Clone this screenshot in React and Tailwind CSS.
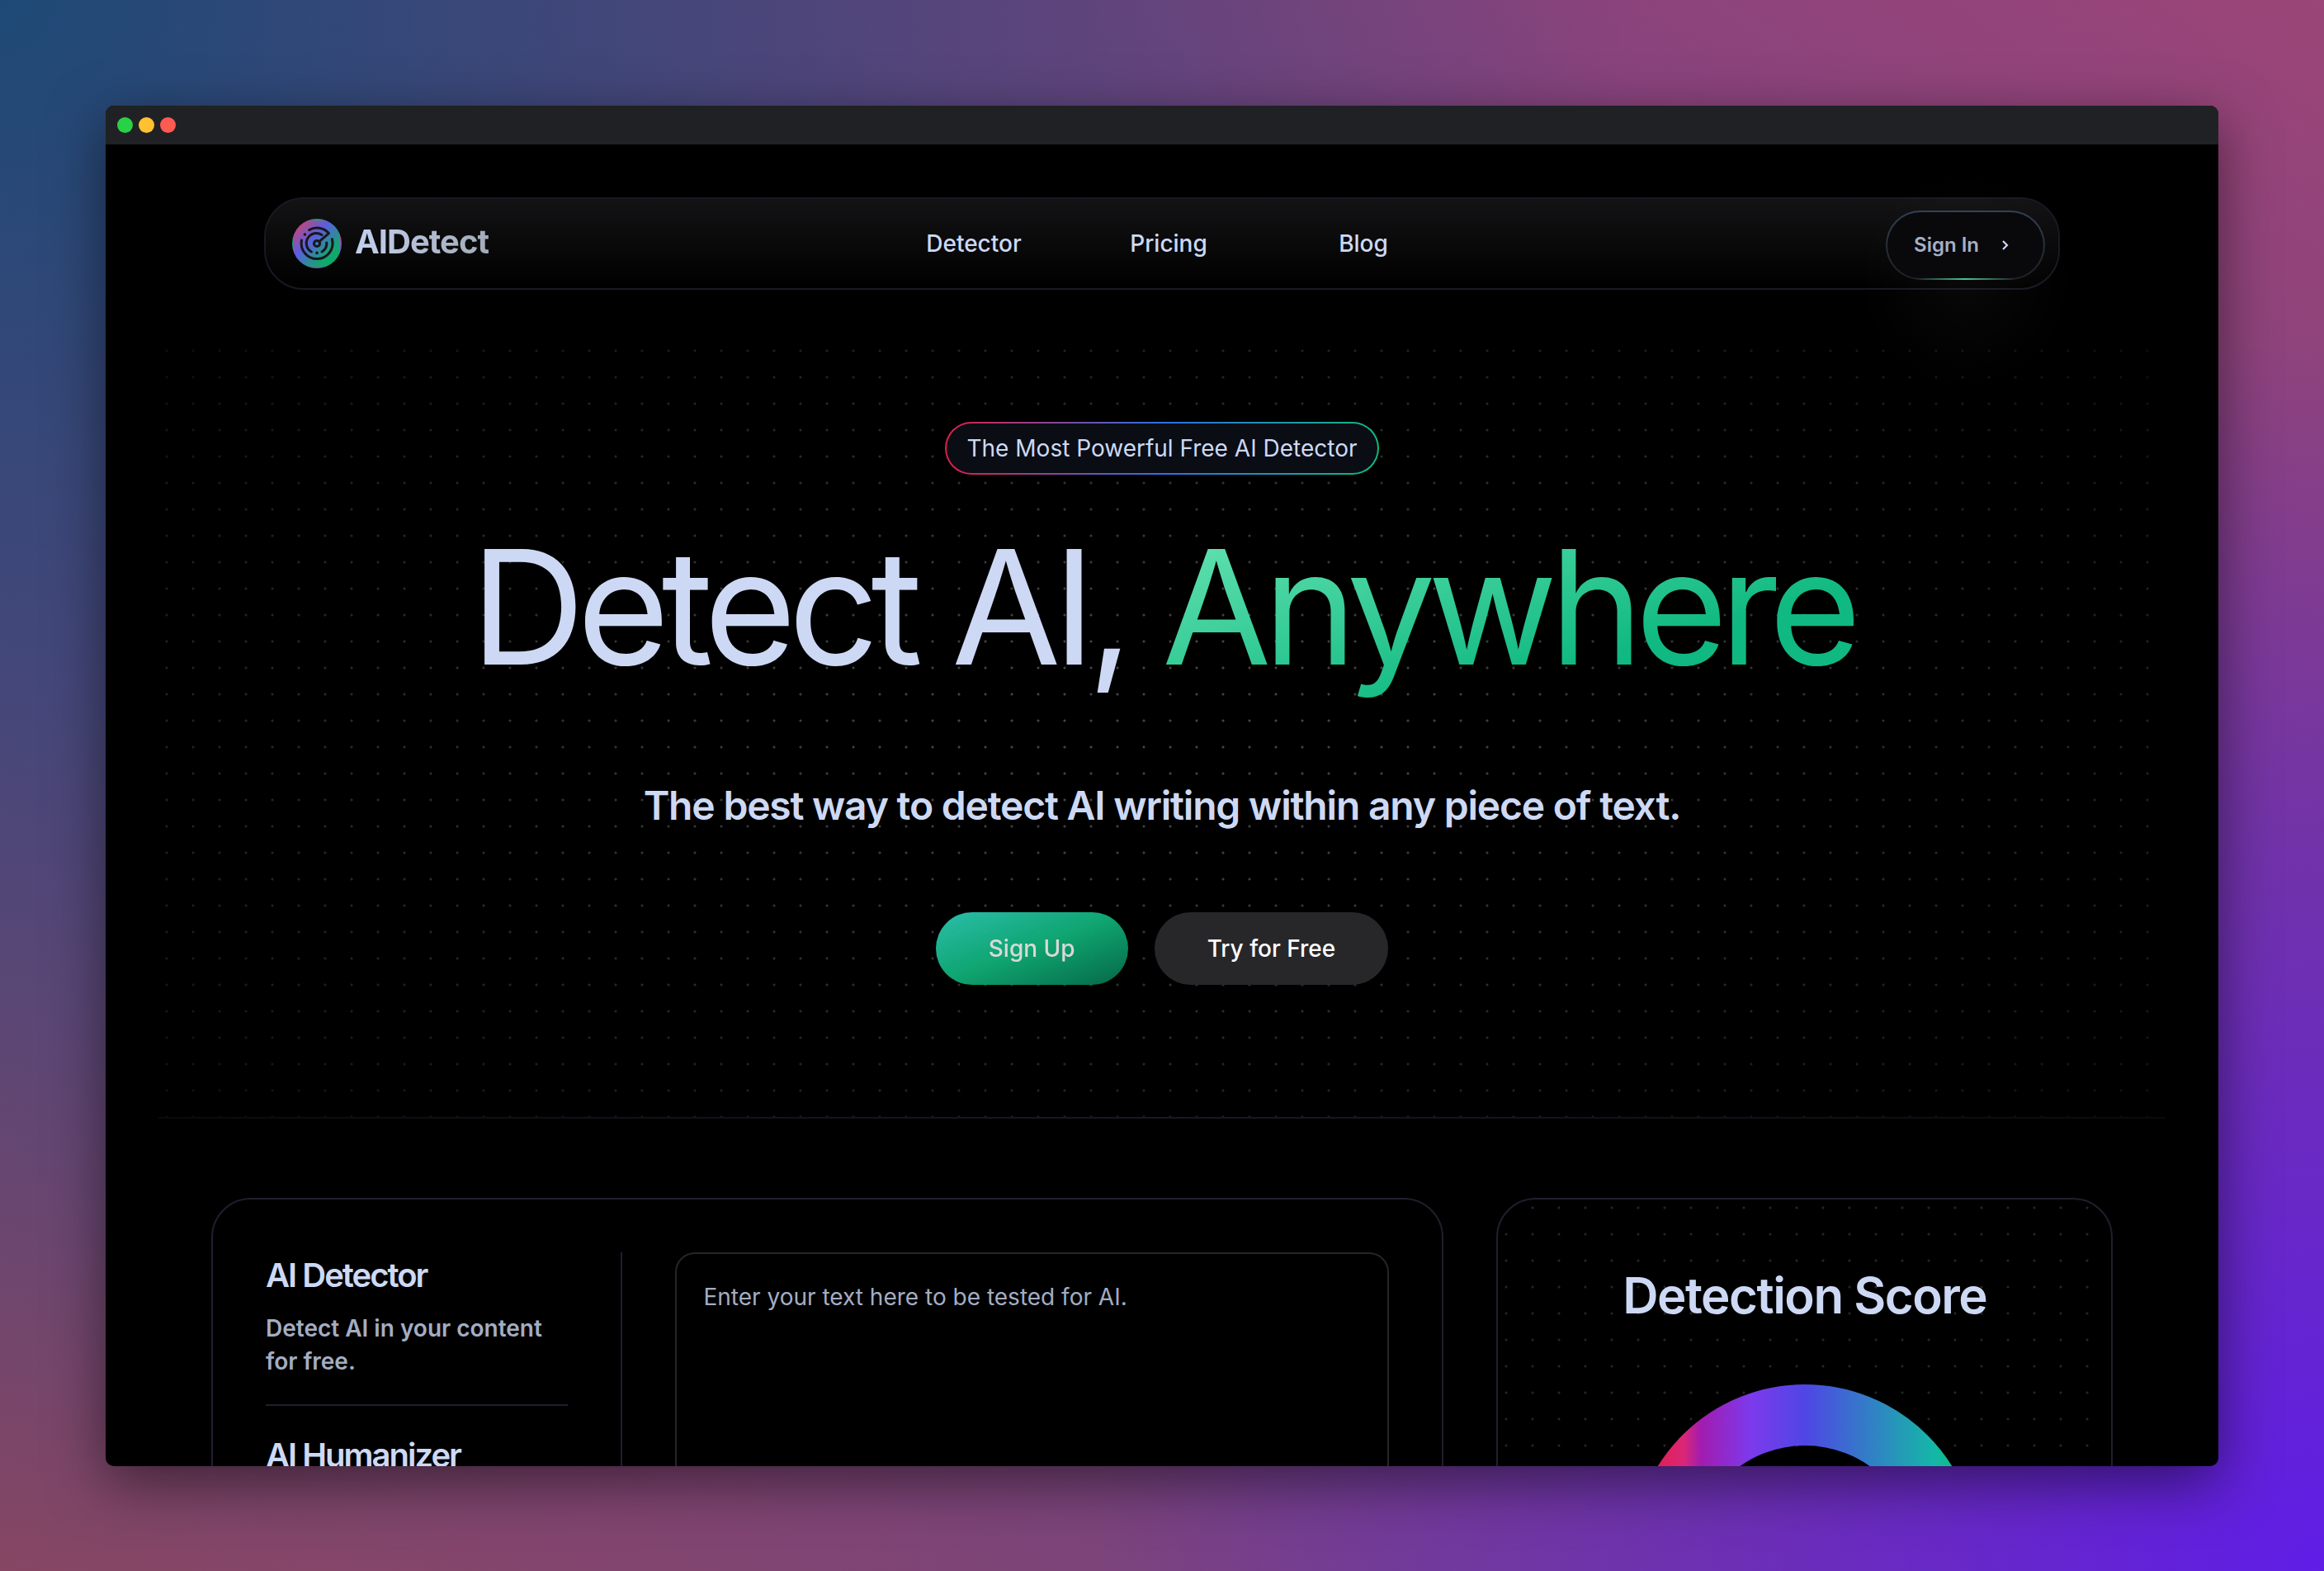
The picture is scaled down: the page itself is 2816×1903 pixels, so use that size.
import React from "react";

const DOTS =
  "bg-[radial-gradient(circle_at_10px_10px,#444_1px,transparent_2px)] bg-[size:32px_32px]";

function Logo() {
  return (
    <span className="flex size-[60px] items-center justify-center rounded-full border-2 border-transparent bg-[linear-gradient(135deg,#e0405a,#5b5ee0_40%,#10a86e_75%)]">
      <svg viewBox="0 0 24 24" className="size-12" fill="none" stroke="#18181b" strokeWidth="1.5" strokeLinecap="round" strokeLinejoin="round" aria-hidden="true">
        <circle cx="12" cy="12" r="1.8" />
        <path d="M7.3 3.8A9.5 9.5 0 0 1 19.2 5.8L13.4 10.8" />
        <path d="M2.7 10A9.5 9.5 0 1 0 21.2 9.3" />
        <path d="M15 6.8A6 6 0 1 0 8.7 17" />
        <path d="M17.9 11.5A6 6 0 0 1 15 17" />
        <circle cx="4.7" cy="6.5" r="0.9" fill="#18181b" stroke="none" />
        <circle cx="12" cy="17.7" r="0.9" fill="#18181b" stroke="none" />
      </svg>
    </span>
  );
}

function Header() {
  return (
    <header className="relative mx-auto grid w-[85%] grid-cols-3 items-center rounded-[48px] border-2 border-[#1a1822] bg-linear-to-b/srgb from-[#131315] to-black pl-8 pr-4">
      <a href="#home" className="flex items-center gap-4">
        <Logo />
        <span className="bg-linear-to-r/srgb from-[#c3d0ee] to-[#a3abb8] bg-clip-text pb-1 text-[40px] leading-[48px] font-bold tracking-tight text-transparent">
          AIDetect
        </span>
      </a>
      <nav className="grid grid-cols-3 text-center text-[28px] leading-10 font-medium text-[#cdd9f4]">
        <a href="#detector">Detector</a>
        <a href="#pricing">Pricing</a>
        <a href="#blog">Blog</a>
      </nav>
      <div className="flex justify-end pt-3.5 pb-2.5">
        <div className="relative rounded-full bg-linear-to-b/srgb from-[#334155] to-[#1c1c1e] p-0.5">
          <span className="pointer-events-none absolute top-full left-1/2 size-[260px] -translate-1/2 bg-[radial-gradient(closest-side,rgba(255,255,255,0.03),transparent)]" />
          <button className="relative flex h-20 items-center gap-7 rounded-full bg-[#09090b] pr-[42px] pl-8 text-2xl font-semibold text-[#a6afc6]">
            Sign In
            <svg viewBox="0 0 8 12" className="h-3 w-2" fill="none" stroke="#cdd9f4" strokeWidth="2.2" aria-hidden="true">
              <path d="M1 1 6 6 1 11" />
            </svg>
          </button>
          <span className="absolute inset-x-9 bottom-0 h-0.5 bg-linear-to-r/srgb from-transparent via-[#49c393] to-transparent" />
        </div>
      </div>
    </header>
  );
}

function Hero() {
  return (
    <section className="relative mx-auto mt-16 flex h-[940px] w-[95%] flex-col items-center">
      <div className={`absolute inset-x-0 top-0 bottom-0.5 ${DOTS} [mask-image:radial-gradient(ellipse_at_center,#000_15%,rgba(0,0,0,0.45)_75%,rgba(0,0,0,0.2))]`} />
      <div className="absolute inset-x-0 bottom-0 h-0.5 bg-linear-to-r/srgb from-[#0a0910] via-[#1a1824] to-[#0a0910]" />
      <div className="relative mt-24 rounded-full bg-linear-to-r/srgb from-[#e11d48] via-[#2f70e6] to-[#10b981] p-0.5">
        <p className="rounded-full bg-[#0a0d14] px-6 py-2.5 text-[28px] leading-10 text-[#cdd9f4]">
          The Most Powerful Free AI Detector
        </p>
      </div>
      <h1 className="relative mt-16 text-[192px] leading-[192px] tracking-tighter text-[#cdd9f4]">
        Detect AI,{" "}
        <span className="bg-linear-to-br/srgb from-[#6ee7b7] to-[#10b981] to-70% bg-clip-text text-transparent">Anywhere</span>
      </h1>
      <p className="relative mt-28 text-5xl leading-[66px] font-semibold tracking-tight text-[#cdd9f4]">
        The best way to detect AI writing within any piece of text.
      </p>
      <div className="relative mt-24 flex gap-8 text-[28px] leading-10 font-medium">
        <button className="rounded-full bg-linear-to-br/srgb from-[#2dc9b4] via-[#10ad76] to-[#066e4d] px-16 py-6 text-neutral-200 opacity-95">
          Sign Up
        </button>
        <button className="rounded-full bg-zinc-800 px-16 py-6 text-white">Try for Free</button>
      </div>
    </section>
  );
}

function Tool({ title, children }) {
  return (
    <div className="mb-8 border-b-2 border-[#211e2e] pb-8 last:border-b-0">
      <h2 className="text-[40px] leading-[56px] font-semibold tracking-tighter text-[#cdd9f4]">{title}</h2>
      {children && <p className="mt-4 text-[28px] leading-10 font-semibold text-[#a3adc2]">{children}</p>}
    </div>
  );
}

function DetectorPanel() {
  return (
    <section className="grid grid-cols-[1fr_2fr] gap-16 rounded-[48px] border-2 border-[#211e2e] p-16">
      <div className="border-r-2 border-[#211e2e] pr-16">
        <Tool title="AI Detector">Detect AI in your content for free.</Tool>
        <Tool title="AI Humanizer" />
      </div>
      <textarea
        aria-label="Text to test"
        placeholder="Enter your text here to be tested for AI."
        className="h-[600px] resize-none rounded-3xl border-2 border-neutral-800 bg-transparent p-8 text-[28px] leading-10 text-[#cdd9f4] placeholder:text-[#a3adc2]"
      />
    </section>
  );
}

function ScorePanel() {
  return (
    <section className="relative flex flex-col items-center overflow-hidden rounded-[48px] border-2 border-[#211e2e] pt-20">
      <div className={`absolute inset-0 ${DOTS} opacity-55`} />
      <h2 className="relative text-[60px] leading-[72px] font-semibold tracking-tight text-[#cdd9f4]">Detection Score</h2>
      <svg viewBox="0 0 420 420" className="relative mt-[72px] size-[420px]" fill="none" role="img" aria-label="Score ring">
        <defs>
          <linearGradient id="ring" gradientUnits="userSpaceOnUse" x1="0" y1="0" x2="420" y2="0">
            <stop offset="0.05" stopColor="#e11d48" />
            <stop offset="0.15" stopColor="#db2777" />
            <stop offset="0.2" stopColor="#a21caf" />
            <stop offset="0.345" stopColor="#7c3aed" />
            <stop offset="0.5" stopColor="#4f46e5" />
            <stop offset="0.875" stopColor="#14b8a6" />
            <stop offset="0.94" stopColor="#10b981" />
          </linearGradient>
        </defs>
        <circle cx="210" cy="210" r="173" stroke="url(#ring)" strokeWidth="74" />
      </svg>
    </section>
  );
}

export default function App() {
  return (
    <div className="h-screen bg-[radial-gradient(circle_at_0%_0%,#1e4976,transparent_58%),radial-gradient(circle_at_100%_100%,#5f1de6,transparent_44%),linear-gradient(to_top_right,#8a4662,#79447f_30%,#7e427f_72%,#9b4578)] px-32 pt-32 pb-[127px] font-['Inter',sans-serif]">
      <div className="flex h-full flex-col overflow-hidden rounded-[10px] bg-black shadow-[0_20px_68px_rgba(0,0,0,0.5)]">
        <div className="flex h-[47px] shrink-0 items-center gap-[7px] bg-[#202124] px-3.5">
          <span className="size-[19px] rounded-full bg-[#28d146]" />
          <span className="size-[19px] rounded-full bg-[#ffc130]" />
          <span className="size-[19px] rounded-full bg-[#ff5a52]" />
        </div>
        <main className="min-h-0 flex-1 overflow-hidden pt-16">
          <Header />
          <Hero />
          <div className="mx-auto mt-24 grid w-[90%] grid-cols-[2fr_1fr] gap-16">
            <DetectorPanel />
            <ScorePanel />
          </div>
        </main>
      </div>
    </div>
  );
}
